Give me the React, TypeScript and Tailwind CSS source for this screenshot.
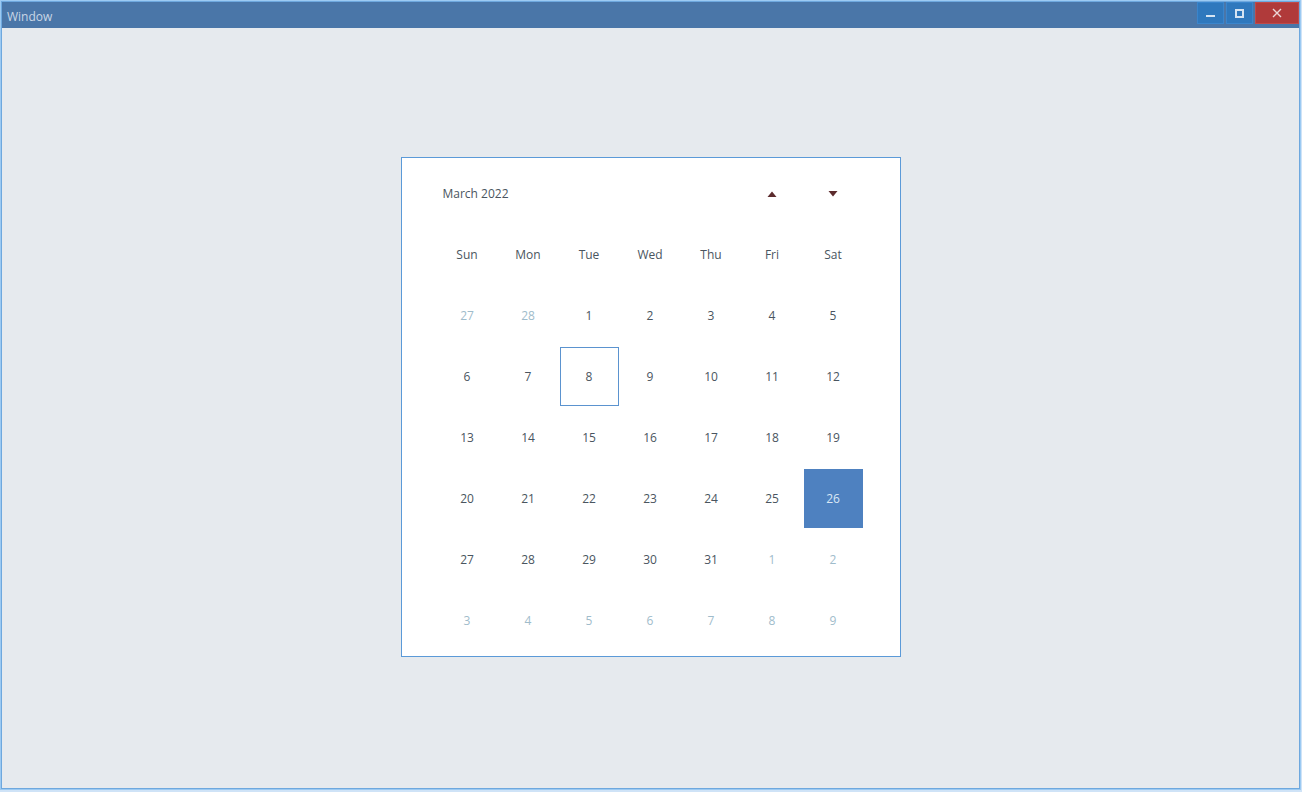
import React from "react";

type Day = { n: number; other?: boolean };

const names = ["Sun", "Mon", "Tue", "Wed", "Thu", "Fri", "Sat"];

function buildDays(): Day[] {
  const days: Day[] = [{ n: 27, other: true }, { n: 28, other: true }];
  for (let i = 1; i <= 31; i++) days.push({ n: i });
  for (let i = 1; i <= 9; i++) days.push({ n: i, other: true });
  return days;
}

function TitleBar() {
  return (
    <div className="h-[26px] bg-[#4a76a8] flex items-start justify-between shrink-0">
      <span className="pl-[5px] pt-[9px] text-[12px] leading-none text-[#c9d6e6]">Window</span>
      <div className="flex gap-[2px]">
        <button className="w-[27px] h-[22px] bg-[#2f78bd] flex items-end justify-center pb-[6px] border border-[#3a85cc]">
          <span className="block w-[9px] h-[2px] bg-[#d6e4f2]" />
        </button>
        <button className="w-[27px] h-[22px] bg-[#2f78bd] flex items-center justify-center border border-[#3a85cc]">
          <span className="block w-[9px] h-[9px] border-[2px] border-[#d6e4f2]" />
        </button>
        <button className="w-[44px] h-[22px] bg-[#b03a3a] flex items-center justify-center border border-[#bf4a4a]">
          <svg width="10" height="10" viewBox="0 0 10 10">
            <path d="M1 1L9 9M9 1L1 9" stroke="#ecd6d6" strokeWidth="1.4" />
          </svg>
        </button>
      </div>
    </div>
  );
}

function Calendar() {
  const days = buildDays();
  return (
    <div className="w-[500px] h-[500px] bg-white border border-[#5b9ad8] px-[35px] py-[5px]">
      <div className="grid grid-cols-7 w-[427px]">
        <div className="col-span-5 h-[61px] flex items-center pl-[6px] text-[#4a5560]">March 2022</div>
        <div className="h-[61px] flex items-center justify-center">
          <svg width="10" height="6" viewBox="0 0 10 6">
            <path d="M0.5 6L5 0.5L9.5 6Z" fill="#5c2b2d" />
          </svg>
        </div>
        <div className="h-[61px] flex items-center justify-center">
          <svg width="10" height="6" viewBox="0 0 10 6">
            <path d="M0.5 0L9.5 0L5 5.5Z" fill="#5c2b2d" />
          </svg>
        </div>
        {names.map((d) => (
          <div key={d} className="h-[61px] flex items-center justify-center text-[#4a5560]">
            {d}
          </div>
        ))}
        {days.map((d, i) => {
          const today = !d.other && d.n === 8;
          const sel = !d.other && d.n === 26;
          return (
            <div key={i} className="h-[61px] p-[1px]">
              <div
                className={
                  "w-full h-full flex items-center justify-center " +
                  (sel
                    ? "bg-[#4e81c0] text-[#dbe8f5]"
                    : today
                    ? "border border-[#5b93cf] text-[#4a5560]"
                    : d.other
                    ? "text-[#9fbccb]"
                    : "text-[#4a5560]")
                }
              >
                {d.n}
              </div>
            </div>
          );
        })}
      </div>
    </div>
  );
}

export default function App() {
  return (
    <div
      className="w-[1302px] h-[792px] bg-[#cfe3f7] text-[12px] overflow-hidden"
      style={{ fontFamily: '"Open Sans", "Noto Sans", sans-serif' }}
    >
      <div className="w-[1301px] h-[790px] p-[1px] bg-[#9ccaf2]">
        <div className="w-full h-full border border-[#6ea8de] flex flex-col bg-[#e6eaee]">
          <TitleBar />
          <div className="flex-1 flex items-center justify-center pb-[2px]">
            <Calendar />
          </div>
        </div>
      </div>
    </div>
  );
}
